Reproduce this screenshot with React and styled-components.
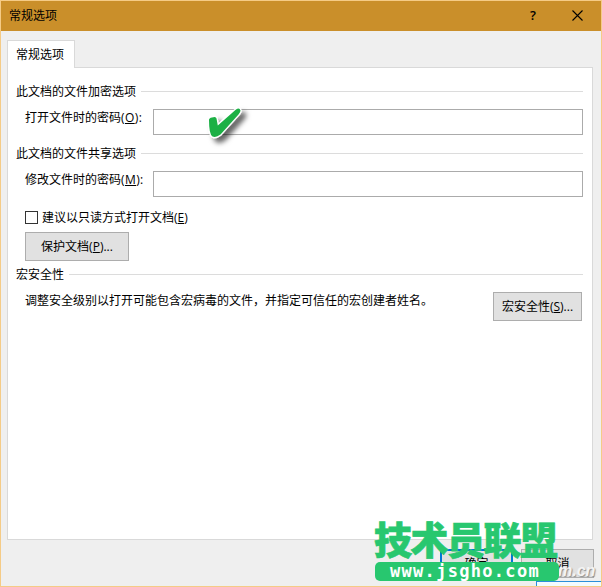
import React from "react";
import styled, { createGlobalStyle } from "styled-components";

const GlobalStyle = createGlobalStyle`
  * {
    box-sizing: border-box;
  }

  body {
    margin: 0;
    overflow: hidden;
    color: #000000;
    font-family: "Open Sans", "Noto Sans CJK SC", sans-serif;
    font-size: 12px;
    line-height: 16px;
  }
`;

const Dialog = styled.div`
  position: relative;
  width: 602px;
  height: 587px;
  border: 1px solid #f5cb86;
  background: #efefef;
  overflow: hidden;
`;

const TitleBar = styled.header`
  display: flex;
  align-items: center;
  height: 30px;
  padding: 0 18px 2px 8px;
  background: #ca8f2a;
`;

const Title = styled.span`
  flex: 1;
  padding-top: 2px;
`;

const HelpIcon = styled.span`
  width: 8px;
  margin-right: 34px;
  font-size: 13px;
  font-weight: 600;
`;

const CloseIcon = styled.svg`
  width: 11px;
  height: 11px;
`;

const Tab = styled.div`
  position: relative;
  width: 68px;
  height: 28px;
  margin: 9px 0 -1px 6px;
  padding: 6px 8px;
  border: 1px solid #d9d9d9;
  border-bottom: 0;
  background: #ffffff;
  white-space: nowrap;
`;

const Panel = styled.main`
  width: 586px;
  height: 473px;
  margin-left: 6px;
  padding: 15px 9px 0 8px;
  border: 1px solid #d9d9d9;
  background: #ffffff;
`;

const Legend = styled.div`
  display: flex;
  align-items: center;
  gap: 5px;
  height: 16px;

  &::after {
    content: "";
    flex: 1;
    height: 1px;
    background: #dcdcdc;
  }
`;

const LegendText = styled.span`
  padding-top: 2px;
`;

const Field = styled.label`
  display: flex;
  height: 26px;
  margin: ${(props) => props.$margin};
  padding-left: 9px;
`;

const FieldLabel = styled.span`
  width: 128px;
  padding-top: 1px;
  white-space: nowrap;
`;

const AccessKey = styled.span`
  letter-spacing: 0.4px;
`;

const Input = styled.input`
  width: 430px;
  height: 26px;
  border: 1px solid #ababab;
  background: #ffffff;
  outline: none;
`;

const CheckRow = styled.label`
  display: flex;
  align-items: center;
  gap: 4px;
  height: 16px;
  margin: 12px 0 7px 9px;
`;

const CheckText = styled.span`
  padding-top: 2px;
`;

const CheckBox = styled.span`
  width: 13px;
  height: 13px;
  border: 1px solid #333333;
`;

const Button = styled.button`
  width: ${(props) => props.$width}px;
  height: 29px;
  padding: 0;
  border: ${(props) => (props.$primary ? "2px solid #0078d7" : "1px solid #adadad")};
  background: #e1e1e1;
  color: #000000;
  font: inherit;
`;

const ProtectRow = styled.div`
  height: 34px;
  padding-left: 9px;
`;

const MacroRow = styled.div`
  display: flex;
  justify-content: space-between;
  padding: 10px 1px 0 9px;
`;

const Hint = styled.span`
  font-family: "Noto Sans CJK SC", sans-serif;
`;

const Actions = styled.footer`
  display: flex;
  justify-content: flex-end;
  gap: 8px;
  padding: 9px 7px 0 0;
`;

const CheckMark = styled.svg`
  position: absolute;
  left: 199px;
  top: 97px;
  width: 56px;
  height: 52px;
`;

const SiteMark = styled.div`
  position: absolute;
  left: 374px;
  top: 518px;
  width: 184px;
`;

const SiteName = styled.svg`
  display: block;
  width: 184px;
  height: 43px;
  overflow: visible;
  font-family: "Noto Sans CJK SC", sans-serif;
  font-weight: 900;
`;

const SiteUrl = styled.div`
  width: 184px;
  height: 19px;
  padding-left: 15px;
  border-radius: 5px;
  background: #28c76f;
  color: #ffffff;
  font: bold 17px/18px "DejaVu Sans Mono", monospace;
  letter-spacing: 1.3px;
  white-space: nowrap;
`;

const CornerMark = styled.span`
  position: absolute;
  left: 557px;
  top: 560px;
  color: #f4f4f4;
  font: italic bold 16px/20px "Liberation Sans", sans-serif;
  text-shadow: 1px 1px 1px #909090;
`;

const CornerBox = styled.div`
  position: absolute;
  left: 535px;
  top: 580px;
  width: 67px;
  height: 10px;
  border: 1px solid #2b8fd9;
  background: #f2fbff;
`;

export default function App() {
  return (
    <>
      <GlobalStyle />
      <Dialog>
        <TitleBar>
          <Title>常规选项</Title>
          <HelpIcon>?</HelpIcon>
          <CloseIcon viewBox="0 0 11 11">
            <path d="M.5.5l10 10M10.5.5l-10 10" stroke="#000000" strokeWidth="1.1" />
          </CloseIcon>
        </TitleBar>
        <Tab>常规选项</Tab>
        <Panel>
          <Legend><LegendText>此文档的文件加密选项</LegendText></Legend>
          <Field $margin="10px 0">
            <FieldLabel>打开文件时的密码<AccessKey>(<u>O</u>):</AccessKey></FieldLabel>
            <Input type="password" />
          </Field>
          <Legend><LegendText>此文档的文件共享选项</LegendText></Legend>
          <Field $margin="10px 0 0">
            <FieldLabel>修改文件时的密码<AccessKey>(<u>M</u>):</AccessKey></FieldLabel>
            <Input type="password" />
          </Field>
          <CheckRow>
            <CheckBox />
            <CheckText>建议以只读方式打开文档(<u>E</u>)</CheckText>
          </CheckRow>
          <ProtectRow>
            <Button $width={104}>保护文档(<u>P</u>)...</Button>
          </ProtectRow>
          <Legend><LegendText>宏安全性</LegendText></Legend>
          <MacroRow>
            <Hint>调整安全级别以打开可能包含宏病毒的文件，并指定可信任的宏创建者姓名。</Hint>
            <Button $width={89}>宏安全性(<u>S</u>)...</Button>
          </MacroRow>
        </Panel>
        <Actions>
          <Button $width={73} $primary>确定</Button>
          <Button $width={73}>取消</Button>
        </Actions>
        <CheckMark viewBox="0 0 56 52">
          <defs>
            <filter id="shadow" x="-30%" y="-30%" width="180%" height="180%">
              <feDropShadow dx="4.5" dy="4.5" stdDeviation="2.4" floodColor="#000000" floodOpacity=".6" />
            </filter>
          </defs>
          <path
            d="M9 22Q9 20 12 19.5Q16 18 16.5 20.5L17.8 27.5L36 11.5Q39.5 9 40.5 12.5Q40.5 14 38.5 16.5L20.5 36.5Q16 40 12.5 38.5Q9 36.5 9 22Z"
            fill="#1bb045"
            stroke="#ffffff"
            strokeWidth="2.6"
            strokeLinejoin="round"
            paintOrder="stroke"
            filter="url(#shadow)"
          />
        </CheckMark>
        <CornerMark>m.cn</CornerMark>
        <CornerBox />
        <SiteMark>
          <SiteName viewBox="0 0 184 43">
            <text x="-1" y="34.8" fontSize="38" textLength="184" fill="#28c76f" stroke="#28c76f" strokeWidth=".7">技术员联盟</text>
          </SiteName>
          <SiteUrl>www.jsgho.com</SiteUrl>
        </SiteMark>
      </Dialog>
    </>
  );
}
